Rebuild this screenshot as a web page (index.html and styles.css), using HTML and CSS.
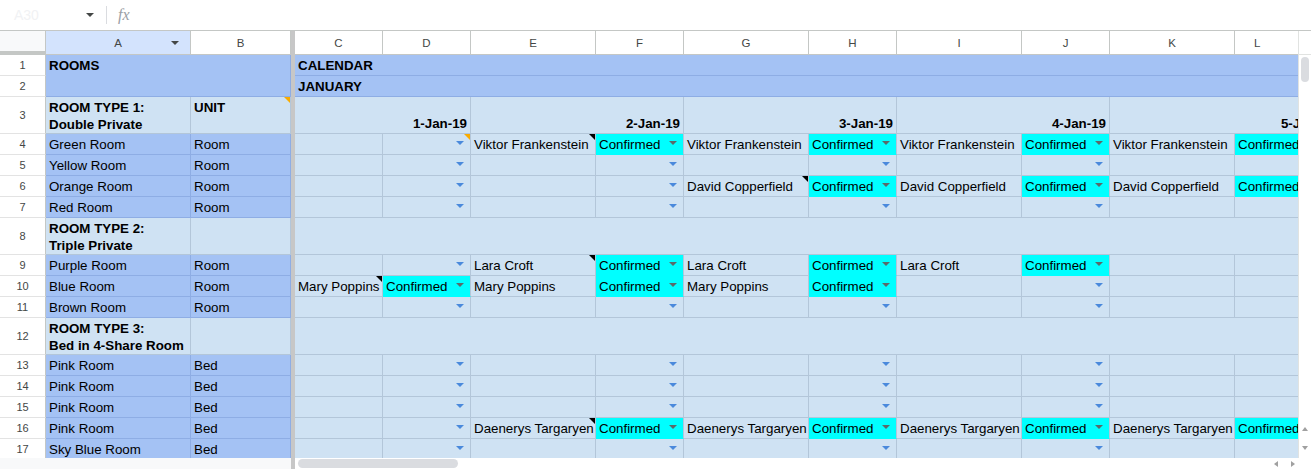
FILE: index.html
```html
<!DOCTYPE html>
<html lang="en">
<head>
    <meta charset="UTF-8">
    <meta name="viewport" content="width=device-width, initial-scale=1.0">
    <title>Room calendar</title>
    <link rel="stylesheet" href="styles.css">
</head>
<body>
    <div class="toolbar">
        <div class="namebox"><span class="cellref">A30</span><span class="caret"></span></div>
        <div class="sep"></div>
        <div class="fx">fx</div>
    </div>

    <div class="sheet">
        <div class="grid-wrap">
            <div class="grid">
                <!-- column headers -->
                <div class="corner"></div>
                <div class="ch selected">A</div>
                <div class="ch">B</div>
                <div class="divider"></div>
                <div class="ch">C</div>
                <div class="ch">D</div>
                <div class="ch">E</div>
                <div class="ch">F</div>
                <div class="ch">G</div>
                <div class="ch">H</div>
                <div class="ch">I</div>
                <div class="ch">J</div>
                <div class="ch">K</div>
                <div class="ch ch-l">L</div>

                <!-- 1 -->
                <div class="rh">1</div>
                <div class="cell blue bold top rooms">ROOMS</div>
                <div class="cell head bold span10">CALENDAR</div>

                <!-- 2 -->
                <div class="rh">2</div>
                <div class="cell head bold span10">JANUARY</div>

                <!-- 3 -->
                <div class="rh">3</div>
                <div class="cell pale bold top">ROOM TYPE 1:<br>Double Private</div>
                <div class="cell pale bold top comment">UNIT</div>
                <div class="cell cal bold right span2">1-Jan-19</div>
                <div class="cell cal bold right span2">2-Jan-19</div>
                <div class="cell cal bold right span2">3-Jan-19</div>
                <div class="cell cal bold right span2">4-Jan-19</div>
                <div class="cell cal bold right span2">5-Jan-19</div>

                <!-- 4 -->
                <div class="rh">4</div>
                <div class="cell blue">Green Room</div>
                <div class="cell blue">Room</div>
                <div class="cell cal"></div>
                <div class="cell cal dd comment"></div>
                <div class="cell cal note">Viktor Frankenstein</div>
                <div class="cell ok dd">Confirmed</div>
                <div class="cell cal">Viktor Frankenstein</div>
                <div class="cell ok dd">Confirmed</div>
                <div class="cell cal">Viktor Frankenstein</div>
                <div class="cell ok dd">Confirmed</div>
                <div class="cell cal">Viktor Frankenstein</div>
                <div class="cell ok dd">Confirmed</div>

                <!-- 5 -->
                <div class="rh">5</div>
                <div class="cell blue">Yellow Room</div>
                <div class="cell blue">Room</div>
                <div class="cell cal"></div>
                <div class="cell cal dd"></div>
                <div class="cell cal"></div>
                <div class="cell cal dd"></div>
                <div class="cell cal"></div>
                <div class="cell cal dd"></div>
                <div class="cell cal"></div>
                <div class="cell cal dd"></div>
                <div class="cell cal"></div>
                <div class="cell cal dd"></div>

                <!-- 6 -->
                <div class="rh">6</div>
                <div class="cell blue">Orange Room</div>
                <div class="cell blue">Room</div>
                <div class="cell cal"></div>
                <div class="cell cal dd"></div>
                <div class="cell cal"></div>
                <div class="cell cal dd"></div>
                <div class="cell cal note">David Copperfield</div>
                <div class="cell ok dd">Confirmed</div>
                <div class="cell cal">David Copperfield</div>
                <div class="cell ok dd">Confirmed</div>
                <div class="cell cal">David Copperfield</div>
                <div class="cell ok dd">Confirmed</div>

                <!-- 7 -->
                <div class="rh">7</div>
                <div class="cell blue">Red Room</div>
                <div class="cell blue">Room</div>
                <div class="cell cal"></div>
                <div class="cell cal dd"></div>
                <div class="cell cal"></div>
                <div class="cell cal dd"></div>
                <div class="cell cal"></div>
                <div class="cell cal dd"></div>
                <div class="cell cal"></div>
                <div class="cell cal dd"></div>
                <div class="cell cal"></div>
                <div class="cell cal dd"></div>

                <!-- 8 -->
                <div class="rh">8</div>
                <div class="cell pale bold top">ROOM TYPE 2:<br>Triple Private</div>
                <div class="cell pale"></div>
                <div class="cell cal span10"></div>

                <!-- 9 -->
                <div class="rh">9</div>
                <div class="cell blue">Purple Room</div>
                <div class="cell blue">Room</div>
                <div class="cell cal"></div>
                <div class="cell cal dd"></div>
                <div class="cell cal note">Lara Croft</div>
                <div class="cell ok dd">Confirmed</div>
                <div class="cell cal">Lara Croft</div>
                <div class="cell ok dd">Confirmed</div>
                <div class="cell cal">Lara Croft</div>
                <div class="cell ok dd">Confirmed</div>
                <div class="cell cal"></div>
                <div class="cell cal dd"></div>

                <!-- 10 -->
                <div class="rh">10</div>
                <div class="cell blue">Blue Room</div>
                <div class="cell blue">Room</div>
                <div class="cell cal note">Mary Poppins</div>
                <div class="cell ok dd">Confirmed</div>
                <div class="cell cal">Mary Poppins</div>
                <div class="cell ok dd">Confirmed</div>
                <div class="cell cal">Mary Poppins</div>
                <div class="cell ok dd">Confirmed</div>
                <div class="cell cal"></div>
                <div class="cell cal dd"></div>
                <div class="cell cal"></div>
                <div class="cell cal dd"></div>

                <!-- 11 -->
                <div class="rh">11</div>
                <div class="cell blue">Brown Room</div>
                <div class="cell blue">Room</div>
                <div class="cell cal"></div>
                <div class="cell cal dd"></div>
                <div class="cell cal"></div>
                <div class="cell cal dd"></div>
                <div class="cell cal"></div>
                <div class="cell cal dd"></div>
                <div class="cell cal"></div>
                <div class="cell cal dd"></div>
                <div class="cell cal"></div>
                <div class="cell cal dd"></div>

                <!-- 12 -->
                <div class="rh">12</div>
                <div class="cell pale bold top">ROOM TYPE 3:<br>Bed in 4-Share Room</div>
                <div class="cell pale"></div>
                <div class="cell cal span10"></div>

                <!-- 13 -->
                <div class="rh">13</div>
                <div class="cell blue">Pink Room</div>
                <div class="cell blue">Bed</div>
                <div class="cell cal"></div>
                <div class="cell cal dd"></div>
                <div class="cell cal"></div>
                <div class="cell cal dd"></div>
                <div class="cell cal"></div>
                <div class="cell cal dd"></div>
                <div class="cell cal"></div>
                <div class="cell cal dd"></div>
                <div class="cell cal"></div>
                <div class="cell cal dd"></div>

                <!-- 14 -->
                <div class="rh">14</div>
                <div class="cell blue">Pink Room</div>
                <div class="cell blue">Bed</div>
                <div class="cell cal"></div>
                <div class="cell cal dd"></div>
                <div class="cell cal"></div>
                <div class="cell cal dd"></div>
                <div class="cell cal"></div>
                <div class="cell cal dd"></div>
                <div class="cell cal"></div>
                <div class="cell cal dd"></div>
                <div class="cell cal"></div>
                <div class="cell cal dd"></div>

                <!-- 15 -->
                <div class="rh">15</div>
                <div class="cell blue">Pink Room</div>
                <div class="cell blue">Bed</div>
                <div class="cell cal"></div>
                <div class="cell cal dd"></div>
                <div class="cell cal"></div>
                <div class="cell cal dd"></div>
                <div class="cell cal"></div>
                <div class="cell cal dd"></div>
                <div class="cell cal"></div>
                <div class="cell cal dd"></div>
                <div class="cell cal"></div>
                <div class="cell cal dd"></div>

                <!-- 16 -->
                <div class="rh">16</div>
                <div class="cell blue">Pink Room</div>
                <div class="cell blue">Bed</div>
                <div class="cell cal"></div>
                <div class="cell cal dd"></div>
                <div class="cell cal note">Daenerys Targaryen</div>
                <div class="cell ok dd">Confirmed</div>
                <div class="cell cal">Daenerys Targaryen</div>
                <div class="cell ok dd">Confirmed</div>
                <div class="cell cal">Daenerys Targaryen</div>
                <div class="cell ok dd">Confirmed</div>
                <div class="cell cal">Daenerys Targaryen</div>
                <div class="cell ok dd">Confirmed</div>

                <!-- 17 -->
                <div class="rh">17</div>
                <div class="cell blue">Sky Blue Room</div>
                <div class="cell blue">Bed</div>
                <div class="cell cal"></div>
                <div class="cell cal dd"></div>
                <div class="cell cal"></div>
                <div class="cell cal dd"></div>
                <div class="cell cal"></div>
                <div class="cell cal dd"></div>
                <div class="cell cal"></div>
                <div class="cell cal dd"></div>
                <div class="cell cal"></div>
                <div class="cell cal dd"></div>
            </div>
        </div>

        <div class="vscroll">
            <div class="vscroll-head"></div>
            <div class="vthumb"></div>
            <div class="vbtns">
                <span class="tri up"></span>
                <span class="tri down"></span>
            </div>
        </div>
    </div>

    <div class="hbar">
        <div class="hbar-frozen"></div>
        <div class="hbar-divider"></div>
        <div class="htrack">
            <div class="hthumb"></div>
            <div class="hbtns">
                <span class="tri left"></span>
                <span class="tri right-tri"></span>
            </div>
        </div>
        <div class="hbar-corner"></div>
    </div>
</body>
</html>
```

FILE: styles.css
```css
body {
    margin: 0;
    font-family: "Liberation Sans", Arial, sans-serif;
    font-size: 13.33px;
    color: #000000;
    background-color: #ffffff;
    overflow: hidden;
}

/* formula bar */
.toolbar {
    height: 30px;
    border-bottom: 1px solid #c4c7c5;
    display: flex;
    align-items: center;
}

.namebox {
    width: 98px;
    box-sizing: border-box;
    padding-left: 14px;
    display: flex;
    align-items: center;
}

.cellref {
    color: #f1f2f4;
    font-size: 14px;
}

.caret {
    margin-left: auto;
    margin-right: 4px;
    border-left: 4px solid transparent;
    border-right: 4px solid transparent;
    border-top: 4px solid #444746;
}

.sep {
    width: 1px;
    height: 18px;
    margin-left: 8px;
    background-color: #dadce0;
}

.fx {
    margin-left: 11px;
    font-family: "Liberation Serif", serif;
    font-style: italic;
    font-size: 16px;
    color: #9aa0a6;
}

/* sheet */
.sheet {
    display: flex;
    height: 427px;
}

.grid-wrap {
    width: 1298px;
    overflow: hidden;
}

.grid {
    display: grid;
    width: max-content;
    grid-template-columns: 46px 145px 100px 4px 88px 88px 125px 88px 125px 88px 125px 88px 125px 104px;
    grid-template-rows: 24px 21px 21px 37px 21px 21px 21px 21px 37px 21px 21px 21px 37px 21px 21px 21px 21px 21px;
}

.corner {
    background-color: #f8f9fa;
    border-right: 1px solid #c4c7c5;
    border-bottom: 4px solid #c4c7c5;
}

.ch {
    display: flex;
    align-items: center;
    justify-content: center;
    background-color: #ffffff;
    border-right: 1px solid #c4c7c5;
    border-bottom: 1px solid #c4c7c5;
    font-size: 11.5px;
    color: #444746;
}

/* column L runs past the window; keep its letter where the visible part centres it */
.ch-l {
    justify-content: flex-start;
    padding-left: 19px;
}

.ch.selected {
    position: relative;
    background-color: #d3e3fd;
}

.ch.selected::after {
    content: "";
    position: absolute;
    right: 11px;
    top: 10px;
    border-left: 4px solid transparent;
    border-right: 4px solid transparent;
    border-top: 4px solid #444746;
}

.divider {
    grid-column: 4;
    grid-row: 1 / -1;
    background-color: #c7c7c7;
}

.rh {
    display: flex;
    align-items: center;
    justify-content: center;
    background-color: #ffffff;
    border-right: 1px solid #c4c7c5;
    border-bottom: 1px solid #e3e3e3;
    font-size: 11px;
    color: #444746;
}

.cell {
    position: relative;
    display: flex;
    align-items: flex-end;
    padding: 0 3px 2px;
    line-height: 15px;
    white-space: nowrap;
    overflow: hidden;
    border-right: 1px solid;
    border-bottom: 1px solid;
}

.cell.top {
    display: block;
    padding-top: 2px;
    line-height: 17px;
}

.cell.rooms {
    grid-column: span 2;
    grid-row: span 2;
    padding-top: 3px;
    line-height: 15px;
}

.span2 {
    grid-column: span 2;
}

.span10 {
    grid-column: span 10;
}

.bold {
    font-weight: bold;
}

.right {
    justify-content: flex-end;
}

.blue,
.head {
    background-color: #a4c2f4;
    border-color: #8eade4;
}

.pale,
.cal {
    background-color: #cfe2f3;
    border-color: #b3c6d9;
}

.ok {
    background-color: #00ffff;
    border-color: #b3c6d9;
    border-bottom-color: #00ffff;
}

/* dropdown arrow */
.dd::after {
    content: "";
    align-self: center;
    margin-left: auto;
    margin-right: 3px;
    border-left: 4px solid transparent;
    border-right: 4px solid transparent;
    border-top: 4px solid #4a89dc;
}

.ok.dd::after {
    border-top-color: #5a6a6a;
}

/* note / comment markers */
.note::before,
.comment::before {
    content: "";
    position: absolute;
    top: 0;
    right: 0;
    border-left: 6px solid transparent;
    border-top: 6px solid #000000;
}

.comment::before {
    border-top-color: #f9ab00;
}

/* scrollbars */
.vscroll {
    width: 13px;
    box-sizing: border-box;
    border-left: 1px solid #e1e3e1;
    background-color: #ffffff;
    display: flex;
    flex-direction: column;
    align-items: center;
}

.vscroll-head {
    width: 100%;
    height: 24px;
    flex-shrink: 0;
    box-sizing: border-box;
    border-bottom: 1px solid #e1e3e1;
}

.vthumb {
    width: 8px;
    height: 25px;
    margin-top: 2px;
    border-radius: 4px;
    background-color: #dadce0;
}

.vbtns {
    margin-top: auto;
    margin-bottom: 8px;
    display: flex;
    flex-direction: column;
    gap: 15px;
}

.tri {
    display: block;
    width: 0;
    height: 0;
}

.tri.up {
    border-left: 3px solid transparent;
    border-right: 3px solid transparent;
    border-bottom: 4px solid #a0a0a0;
}

.tri.down {
    border-left: 3px solid transparent;
    border-right: 3px solid transparent;
    border-top: 4px solid #a0a0a0;
}

.tri.left {
    border-top: 3px solid transparent;
    border-bottom: 3px solid transparent;
    border-right: 4px solid #a0a0a0;
}

.tri.right-tri {
    border-top: 3px solid transparent;
    border-bottom: 3px solid transparent;
    border-left: 4px solid #a0a0a0;
}

.hbar {
    display: flex;
    height: 11px;
}

.hbar-frozen {
    width: 291px;
    background-color: #f8f9fa;
}

.hbar-divider {
    width: 4px;
    background-color: #c7c7c7;
}

.htrack {
    flex: 1;
    display: flex;
    align-items: center;
    background-color: #ffffff;
}

.hthumb {
    width: 160px;
    height: 9px;
    margin-left: 3px;
    border-radius: 5px;
    background-color: #dadce0;
}

.hbtns {
    margin-left: auto;
    margin-right: 3px;
    display: flex;
    gap: 13px;
}

.hbar-corner {
    width: 13px;
    background-color: #ffffff;
}
```
